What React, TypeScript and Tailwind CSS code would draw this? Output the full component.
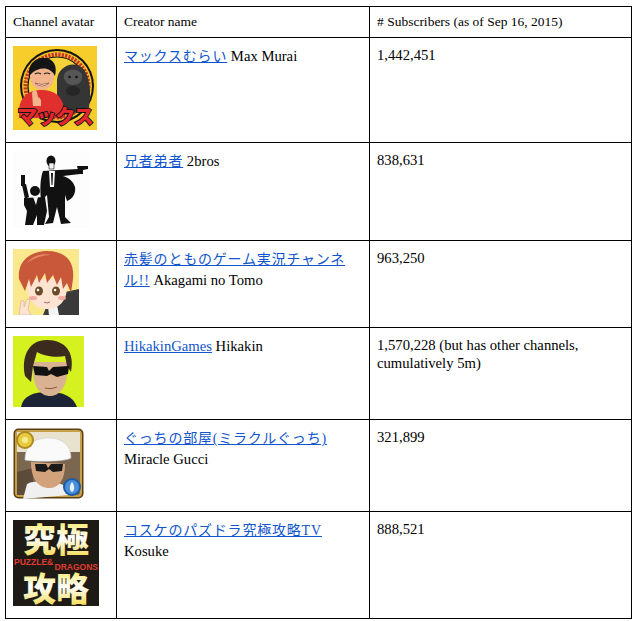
import React from 'react';

const serif = { fontFamily: '"Liberation Serif", "Noto Sans CJK JP", serif' };

function MaxAvatar() {
  return (
    <svg width="84" height="84" viewBox="0 0 84 84" className="block">
      <rect width="84" height="84" fill="#f7cd2c" />
      <circle cx="44" cy="40" r="37" fill="#141414" />
      <circle cx="44" cy="40" r="35" fill="#f3c428" />
      <circle cx="44" cy="40" r="31.5" fill="none" stroke="#c8342a" strokeWidth="4" strokeDasharray="2.2 1.2" />
      <circle cx="44" cy="40" r="29" fill="#f6d23a" stroke="#141414" strokeWidth="1.2" />
      {/* gorilla */}
      <path d="M44 34 C45 18 66 12 73 27 C78 38 78 52 75 66 L44 68 Z" fill="#353535" />
      <path d="M51 29 C53 22 67 22 69 29 C70 35 66 39 60 39 C55 39 50 35 51 29 Z" fill="#565656" />
      <ellipse cx="60" cy="45" rx="7" ry="5" fill="#262626" />
      <circle cx="56.5" cy="31" r="1.3" fill="#111" />
      <circle cx="63.5" cy="31" r="1.3" fill="#111" />
      {/* man */}
      <path d="M6 64 C7 49 18 44 29 44 C41 44 49 50 51 62 L51 72 L6 72 Z" fill="#e0302e" />
      <ellipse cx="29" cy="30" rx="12" ry="14" fill="#f1b48c" />
      <path d="M16 30 C14 14 29 8 38 14 C44 18 43 26 42 30 C38 21 27 20 19 27 Z" fill="#151515" />
      <path d="M22 37 Q29 43 36 37 Q29 40 22 37 Z" fill="#fff" stroke="#7a3a2a" strokeWidth="0.6" />
      <path d="M22 28 Q25 26 28 28" stroke="#222" strokeWidth="1.2" fill="none" />
      <path d="M31 28 Q34 26 37 28" stroke="#222" strokeWidth="1.2" fill="none" />
      <path d="M20 60 L19 47 Q21 41 24 46 L25 51 Q29 52 28 60 Z" fill="#f1b48c" />
      <text
        x="42"
        y="78"
        textAnchor="middle"
        fontSize="20"
        fontWeight="900"
        fill="#e3272b"
        stroke="#141414"
        strokeWidth="1.8"
        paintOrder="stroke"
        fontFamily='"Noto Sans CJK JP", sans-serif'
        letterSpacing="-1"
      >
        マックス
      </text>
    </svg>
  );
}

function BrosAvatar() {
  return (
    <svg width="77" height="77" viewBox="0 0 77 77" className="block">
      <rect width="77" height="77" fill="#fdfdfd" />
      {/* tall man */}
      <ellipse cx="38" cy="10" rx="4.5" ry="5.5" fill="#111" />
      <path d="M36 12 L41 12 L41 18 L36 18 Z" fill="#f2f2f2" stroke="#111" strokeWidth="0.6" />
      <path d="M30 20 L45 19 L66 18 L67 23 L50 25 C56 27 60 30 62 36 C63 42 60 48 54 50 L52 44 L52 66 L58 72 L48 73 L44 56 L40 72 L32 73 L36 66 L34 44 L28 50 C27 38 27 28 30 20 Z" fill="#111" />
      <path d="M36 20 L42 20 L41 36 L37 36 Z" fill="#fafafa" />
      <path d="M38 22 L40 22 L39.5 34 L38.5 34 Z" fill="#111" />
      <path d="M64 15 L75 15 L75 18 L70 19 L70 23 L66 23 Z" fill="#111" />
      {/* small man */}
      <circle cx="22" cy="40" r="5" fill="#111" />
      <path d="M11 47 L32 46 L34 60 L31 74 L24 74 L24 64 L20 74 L12 74 L14 60 L11 54 Z" fill="#111" />
      <path d="M12 48 L9 34 L13 33 L16 46 Z" fill="#111" />
      <path d="M8 24 L12 24 L12 35 L8 35 Z" fill="#111" />
      <path d="M20 46 L25 46 L23 54 Z" fill="#f2f2f2" />
    </svg>
  );
}

function AkagamiAvatar() {
  return (
    <svg width="66" height="66" viewBox="0 0 66 66" className="block">
      <rect width="66" height="66" fill="#fae98c" />
      <path d="M38 46 L66 40 L66 66 L30 66 Z" fill="#3a3a3a" />
      <path d="M34 50 L42 46 L46 66 L36 66 Z" fill="#f4f4f4" />
      <path d="M14 36 C14 52 24 60 34 60 C46 60 54 52 54 38 L54 30 L14 30 Z" fill="#fde4d2" />
      <path d="M6 30 C4 10 20 2 34 2 C50 2 62 10 60 30 L58 44 L54 34 L50 40 L48 28 L44 36 L40 26 L34 34 L32 24 L26 34 L24 26 L18 38 L16 30 L12 42 Z" fill="#c9573a" />
      <path d="M14 14 C20 6 30 4 38 6 C28 6 20 10 14 14 Z" fill="#e48a6a" />
      <ellipse cx="26" cy="42" rx="4" ry="4.5" fill="#6b4a2a" />
      <ellipse cx="43" cy="42" rx="4" ry="4.5" fill="#6b4a2a" />
      <circle cx="25" cy="41" r="1.3" fill="#fff" />
      <circle cx="42" cy="41" r="1.3" fill="#fff" />
      <ellipse cx="20" cy="49" rx="4" ry="2" fill="#f4a8a0" />
      <ellipse cx="49" cy="49" rx="4" ry="2" fill="#f4a8a0" />
      <path d="M31 53 Q34 55 37 53" stroke="#8a4a3a" strokeWidth="0.8" fill="none" />
      <path d="M6 66 L8 52 L11 52 L11 58 L14 50 L17 51 L15 60 L18 66 Z" fill="#fde4d2" stroke="#c9a08a" strokeWidth="0.5" />
    </svg>
  );
}

function HikakinAvatar() {
  return (
    <svg width="71" height="71" viewBox="0 0 71 71" className="block">
      <rect width="71" height="71" fill="#d5f11f" />
      <path d="M8 71 C10 60 20 56 35 56 C50 56 60 60 64 71 Z" fill="#1c2435" />
      <path d="M20 34 C20 52 28 60 37 60 C47 60 54 50 54 36 L54 26 L20 26 Z" fill="#d9b391" />
      <path d="M12 40 C8 20 16 4 34 4 C52 4 62 16 58 36 L54 30 L52 20 C44 22 30 20 24 16 L20 30 L18 46 Z" fill="#3b2a1e" />
      <path d="M20 30 L34 31 L36 35 L40 31 L56 30 L55 38 L44 41 L38 38 L34 40 L22 39 Z" fill="#111" />
      <path d="M32 52 Q38 54 44 51" stroke="#8a5a40" strokeWidth="1" fill="none" />
    </svg>
  );
}

function GucciAvatar() {
  return (
    <svg width="71" height="71" viewBox="0 0 71 71" className="block">
      <rect x="0.5" y="0.5" width="70" height="70" rx="5" fill="#5a3e14" />
      <rect x="2" y="2" width="67" height="67" rx="4" fill="#c8a048" />
      <rect x="4" y="4" width="63" height="63" rx="3" fill="#7b6650" />
      <rect x="4" y="4" width="63" height="20" fill="#e8e2cf" />
      <path d="M4 44 L20 40 L20 67 L4 67 Z" fill="#5c4a3a" />
      <path d="M10 71 L14 56 C20 52 44 52 52 58 L56 67 Z" fill="#f0f0f0" />
      <path d="M18 34 C18 52 26 60 36 60 C46 60 52 52 52 36 Z" fill="#d2a27c" />
      <path d="M12 32 C12 16 22 10 36 10 C50 10 58 18 58 30 C52 34 20 34 12 32 Z" fill="#fafafa" stroke="#ccc" strokeWidth="0.6" />
      <path d="M22 36 L33 36 L35 40 L38 36 L50 36 L49 43 L40 44 L36 41 L32 44 L23 43 Z" fill="#1a1a1a" />
      <circle cx="12" cy="12" r="9" fill="#b08a20" />
      <circle cx="12" cy="12" r="7" fill="#e8cc40" />
      <circle cx="12" cy="12" r="3" fill="#f8ec90" />
      <circle cx="59" cy="59" r="9" fill="#1e5aa8" />
      <circle cx="59" cy="59" r="7" fill="#4a90d8" />
      <path d="M59 54 C62 58 62 62 59 64 C56 62 56 58 59 54 Z" fill="#e8f4ff" />
    </svg>
  );
}

function KosukeAvatar() {
  return (
    <svg width="86" height="86" viewBox="0 0 86 86" className="block">
      <defs>
        <linearGradient id="kanjiFill" x1="0" y1="0" x2="0" y2="1">
          <stop offset="0" stopColor="#f4e02a" />
          <stop offset="0.5" stopColor="#ffffff" />
          <stop offset="1" stopColor="#f0d020" />
        </linearGradient>
      </defs>
      <rect width="86" height="86" fill="#1e1b16" />
      <text
        x="43"
        y="32"
        textAnchor="middle"
        fontSize="33"
        fontWeight="900"
        fill="url(#kanjiFill)"
        fontFamily='"Noto Sans CJK JP", sans-serif'
      >
        究極
      </text>
      <text
        x="43"
        y="81"
        textAnchor="middle"
        fontSize="33"
        fontWeight="900"
        fill="url(#kanjiFill)"
        fontFamily='"Noto Sans CJK JP", sans-serif'
      >
        攻略
      </text>
      <text x="1" y="45" fontSize="8.5" fontWeight="700" fill="#e03a30" fontFamily='"Liberation Sans", sans-serif'>
        PUZZLE&amp;
      </text>
      <text x="85" y="50" textAnchor="end" fontSize="8.5" fontWeight="700" fill="#e03a30" fontFamily='"Liberation Sans", sans-serif'>
        DRAGONS
      </text>
    </svg>
  );
}

function JaLink({ children }: { children: React.ReactNode }) {
  return (
    <a href="#" className="text-[#1155cc] underline text-[14px] tracking-[0.8px]">
      {children}
    </a>
  );
}

const rows = [
  {
    avatar: <MaxAvatar />,
    name: (
      <>
        <JaLink>マックスむらい</JaLink> Max Murai
      </>
    ),
    subs: '1,442,451',
  },
  {
    avatar: <BrosAvatar />,
    name: (
      <>
        <JaLink>兄者弟者</JaLink> 2bros
      </>
    ),
    subs: '838,631',
  },
  {
    avatar: <AkagamiAvatar />,
    name: (
      <>
        <JaLink>
          赤髪のとものゲーム実況チャンネ
          <br />
          ル!!
        </JaLink>{' '}
        Akagami no Tomo
      </>
    ),
    subs: '963,250',
  },
  {
    avatar: <HikakinAvatar />,
    name: (
      <>
        <a href="#" className="text-[#1155cc] underline">
          HikakinGames
        </a>{' '}
        Hikakin
      </>
    ),
    subs: (
      <>
        1,570,228 (but has other channels,
        <br />
        cumulatively 5m)
      </>
    ),
  },
  {
    avatar: <GucciAvatar />,
    name: (
      <>
        <JaLink>ぐっちの部屋(ミラクルぐっち)</JaLink>
        <br />
        Miracle Gucci
      </>
    ),
    subs: '321,899',
  },
  {
    avatar: <KosukeAvatar />,
    name: (
      <>
        <JaLink>コスケのパズドラ究極攻略TV</JaLink>
        <br />
        Kosuke
      </>
    ),
    subs: '888,521',
  },
];

export default function App() {
  return (
    <div className="min-h-screen bg-white pl-[5px] pt-[6px] text-black text-[13.5px]" style={serif}>
      <table className="table-fixed border-collapse w-[626px]">
        <colgroup>
          <col className="w-[111px]" />
          <col className="w-[253px]" />
          <col className="w-[262px]" />
        </colgroup>
        <thead>
          <tr>
            <th className="border border-black font-normal text-left align-top px-[7px] pt-[6px] pb-[6px] leading-[18px]">Channel avatar</th>
            <th className="border border-black font-normal text-left align-top px-[7px] pt-[6px] pb-[6px] leading-[18px]">Creator name</th>
            <th className="border border-black font-normal text-left align-top px-[7px] pt-[6px] pb-[6px] leading-[18px]">
              # Subscribers (as of Sep 16, 2015)
            </th>
          </tr>
        </thead>
        <tbody>
          {rows.map((r, i) => (
            <tr key={i}>
              <td className="border border-black align-top px-[7px] pt-[8px] pb-[12px]">{r.avatar}</td>
              <td className="border border-black align-top px-[7px] pt-[8px] pb-[12px] leading-[21px] text-[14.67px]">{r.name}</td>
              <td className="border border-black align-top px-[7px] pt-[8px] pb-[12px] leading-[18px] text-[14.67px]">{r.subs}</td>
            </tr>
          ))}
        </tbody>
      </table>
    </div>
  );
}
